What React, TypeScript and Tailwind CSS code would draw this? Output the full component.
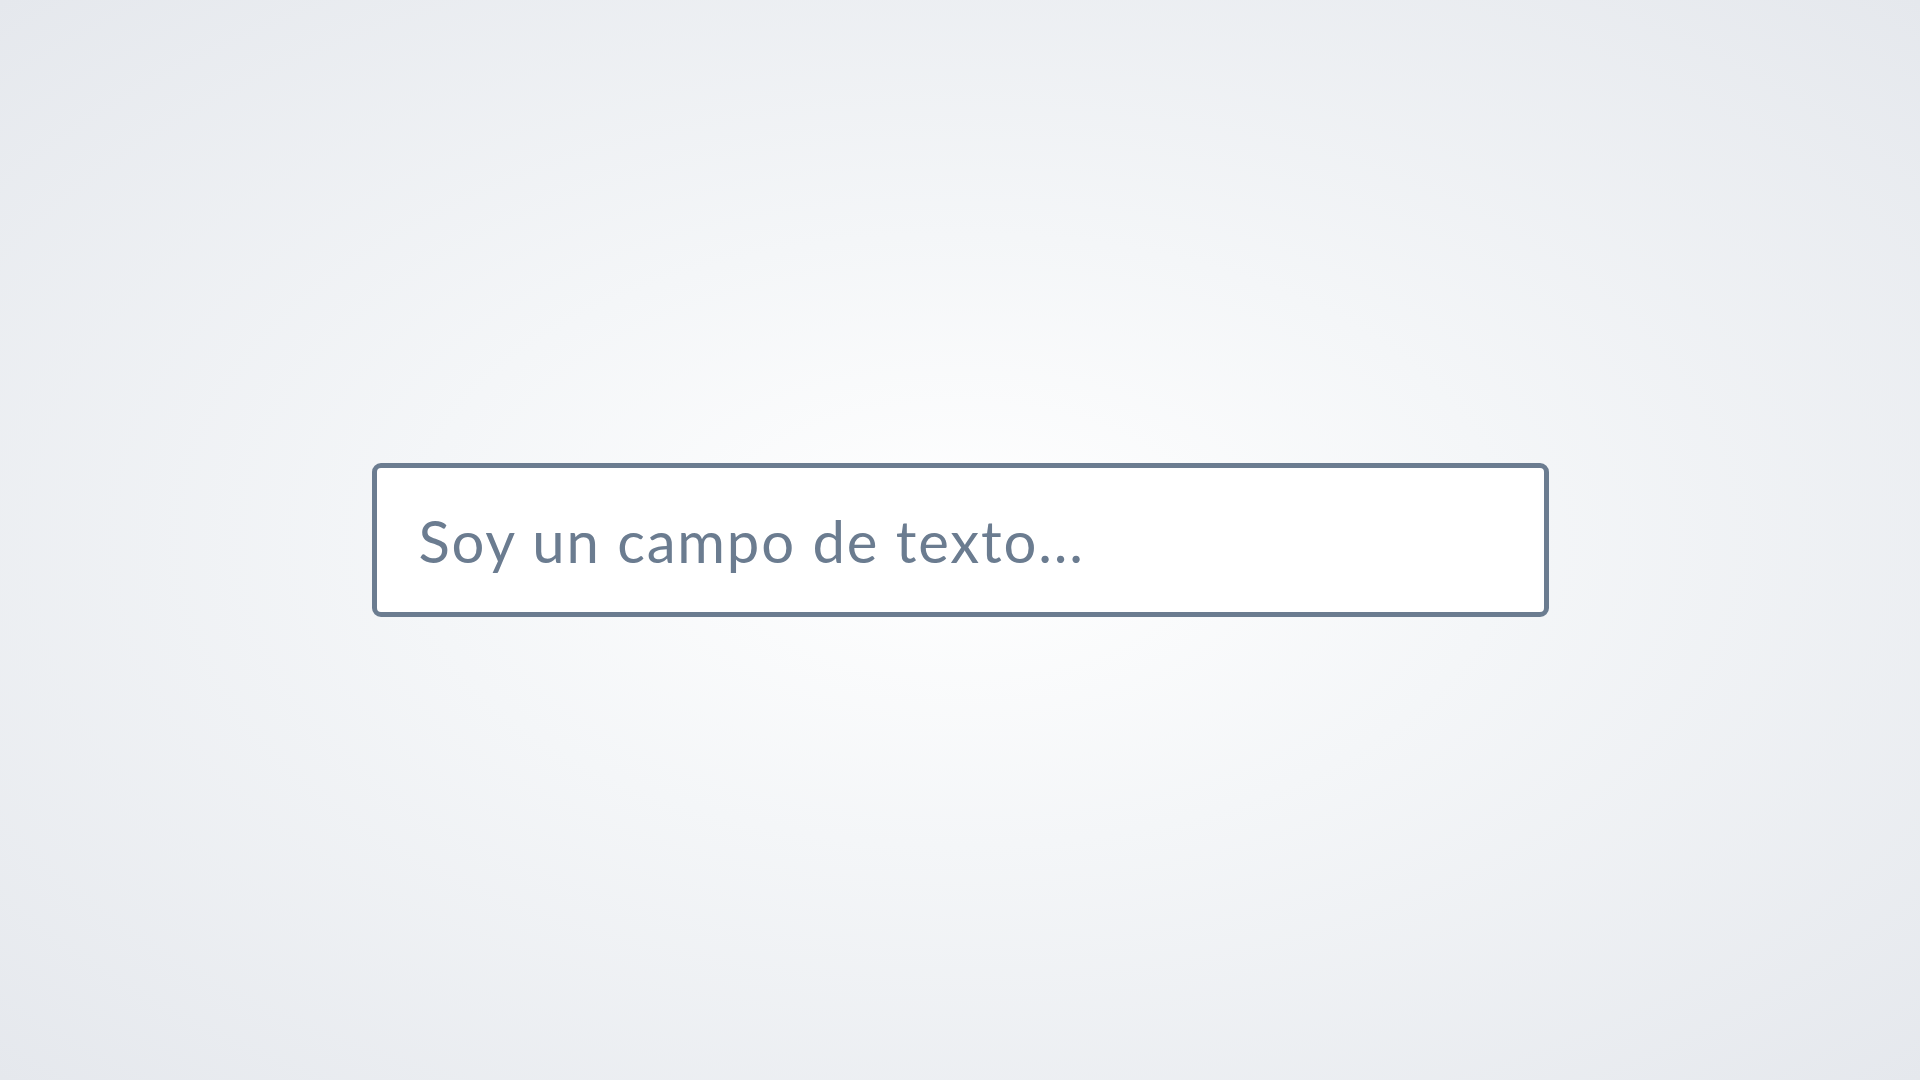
export default function App() {
  return (
    <div className="flex h-screen w-full items-center justify-center bg-[radial-gradient(ellipse_at_center,#ffffff_0%,#f4f6f8_40%,#e5e8ed_100%)]">
      <input
        type="text"
        placeholder="Soy un campo de texto..."
        className="h-[154px] w-[1177px] rounded-[9px] border-[5px] border-[#6b7c90] bg-white pl-[42px] text-[58px] tracking-[1.8px] text-[#6b7c90] outline-none placeholder:text-[#6b7c90] font-['Lato',sans-serif]"
      />
    </div>
  )
}
